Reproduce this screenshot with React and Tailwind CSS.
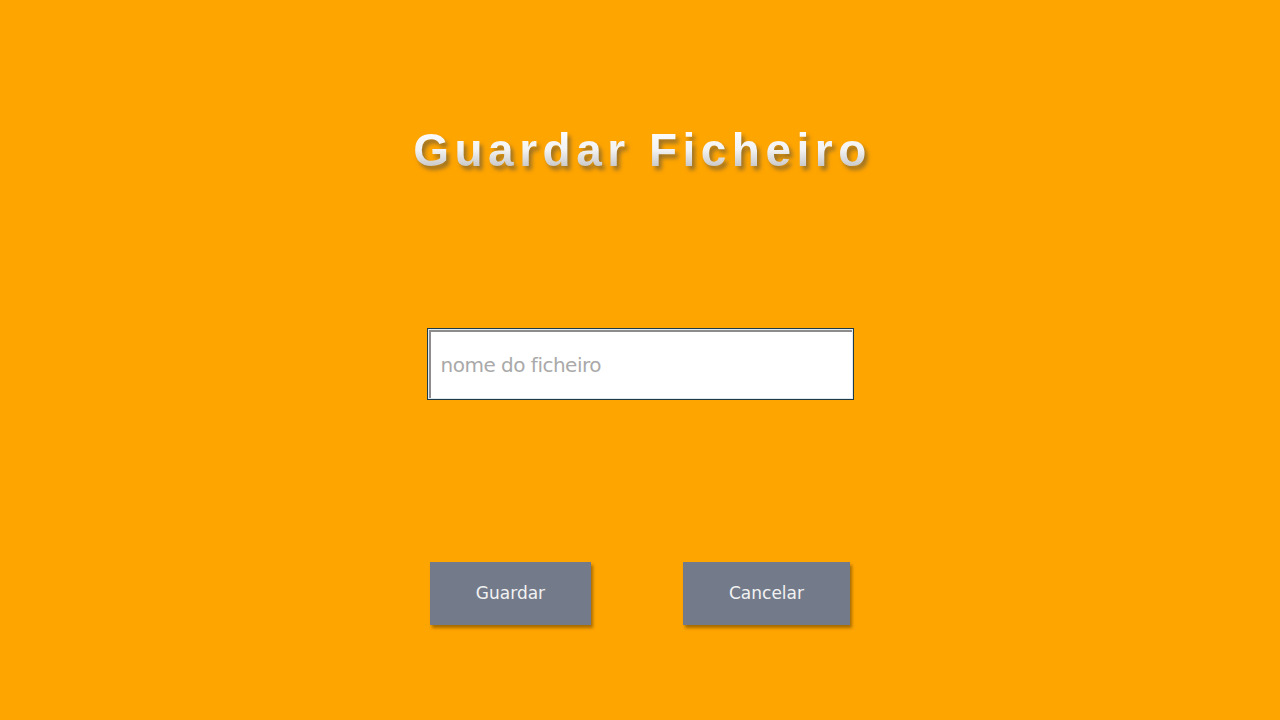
import React, { useState } from "react";

export default function App() {
  const [fileName, setFileName] = useState("");

  return (
    <div className="min-h-screen w-full bg-[#ffa500] flex flex-col items-center font-['Liberation_Sans',Arial,sans-serif]">
      {/* title */}
      <h1 className="mt-[127px] h-[46px] text-[46px] leading-none font-bold tracking-[5.5px] pl-[5px] bg-gradient-to-b from-[#ffffff] via-[#f2f2f2] to-[#b9b9b9] bg-clip-text text-transparent [filter:drop-shadow(3px_4px_2px_rgba(70,70,70,0.55))]">
        Guardar Ficheiro
      </h1>

      {/* file name field */}
      <div className="mt-[155px] w-[427px] h-[72px] border border-[#1d3a48] bg-[#dfe9ee] p-px">
        <input
          type="text"
          value={fileName}
          onChange={(e) => setFileName(e.target.value)}
          placeholder="nome do ficheiro"
          className="w-full h-full bg-white border-l-2 border-t-2 border-[#8c8c8c] pl-[10px] text-[20px] text-[#555] placeholder:text-[#a9a9a9] outline-none font-['DejaVu_Sans',sans-serif] tracking-[-0.5px]"
        />
      </div>

      {/* actions */}
      <div className="mt-[162px] flex gap-[92px]">
        <button className="w-[161px] h-[63px] bg-[#737b8b] text-[#f2f2f2] text-[17px] shadow-[2px_3px_3px_rgba(0,0,0,0.35)] font-['DejaVu_Sans',sans-serif]">
          Guardar
        </button>
        <button className="w-[167px] h-[63px] bg-[#737b8b] text-[#f2f2f2] text-[17px] shadow-[2px_3px_3px_rgba(0,0,0,0.35)] font-['DejaVu_Sans',sans-serif]">
          Cancelar
        </button>
      </div>
    </div>
  );
}
